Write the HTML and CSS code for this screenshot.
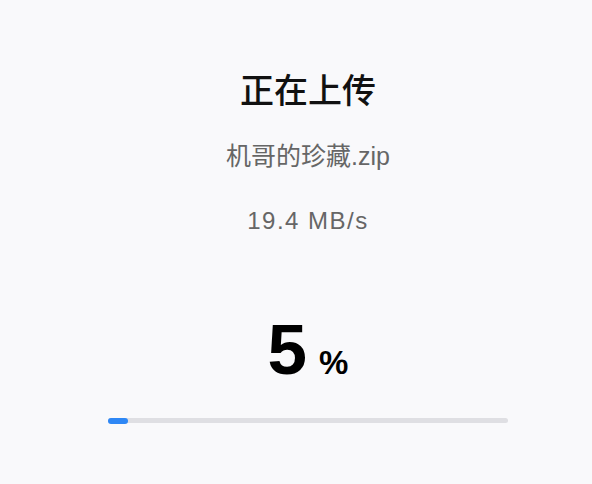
FILE: index.html
```html
<!DOCTYPE html>
<html lang="zh-CN">
<head>
<meta charset="utf-8">
<link rel="stylesheet" href="styles.css">
</head>
<body>
<main class="upload">
  <h1 class="title">正在上传</h1>
  <p class="file">机哥的珍藏.zip</p>
  <p class="speed">19.4 MB/s</p>
  <div class="percent"><span class="num">5</span><span class="sign">%</span></div>
  <div class="track"><div class="fill" style="width:5%"></div></div>
</main>
</body>
</html>
```
FILE: styles.css
```css
html, body {
  margin: 0;
  padding: 0;
}
body {
  width: 592px;
  height: 484px;
  background: #f9f9fb;
  font-family: "Liberation Sans", "Noto Sans CJK SC", sans-serif;
  overflow: hidden;
}
.upload {
  display: flex;
  flex-direction: column;
  align-items: center;
  padding-top: 69px;
  padding-left: 24px;
}
.title {
  margin: 0;
  font-family: "Noto Sans CJK SC", sans-serif;
  font-size: 34px;
  line-height: 40px;
  font-weight: 500;
  color: #111;
}
.file {
  margin: 32px 0 0;
  font-family: "Liberation Sans", "Noto Sans CJK SC", sans-serif;
  font-size: 25px;
  line-height: 30px;
  color: #666;
}
.speed {
  margin: 35px 0 0;
  font-size: 24px;
  line-height: 30px;
  color: #666;
  letter-spacing: 1.5px;
}
.percent {
  margin-top: 78px;
  display: flex;
  align-items: baseline;
  gap: 12px;
  color: #000;
  font-weight: 700;
}
.num {
  font-size: 71px;
  line-height: 71px;
}
.sign {
  font-size: 33px;
  line-height: 33px;
}
.track {
  margin-top: 33px;
  width: 400px;
  height: 5px;
  background: #dfdfe3;
  border-radius: 3px;
  position: relative;
}
.fill {
  position: absolute;
  left: 0;
  top: -0.5px;
  height: 6px;
  background: #2e87f5;
  border-radius: 3px;
}
```
